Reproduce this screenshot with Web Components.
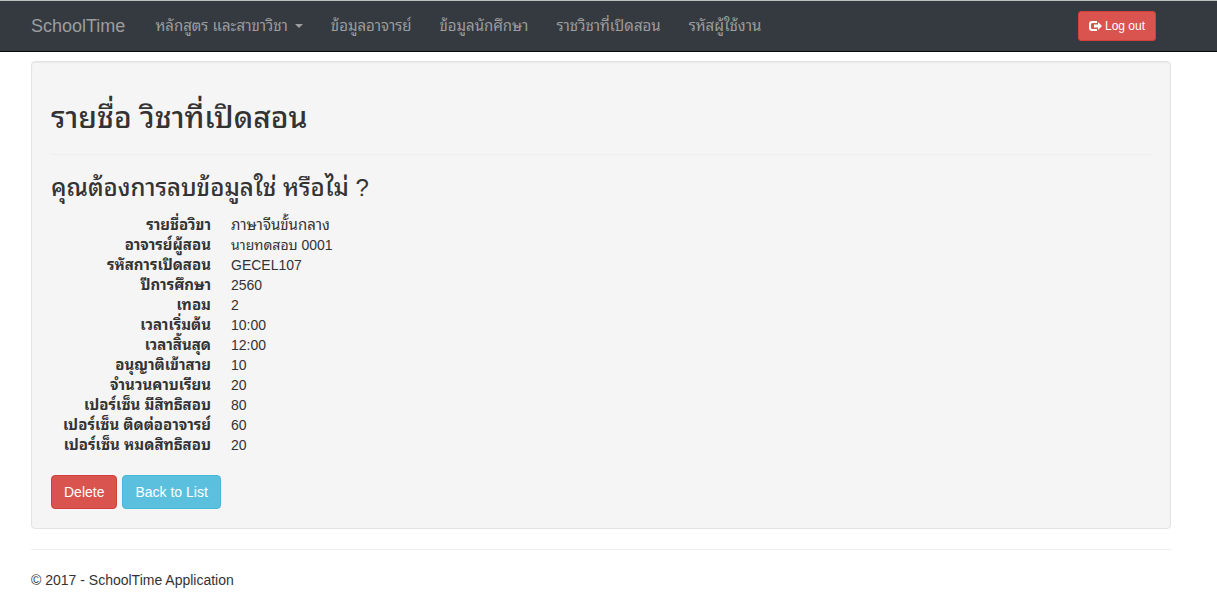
<!DOCTYPE html>
<html lang="th">
<head>
<meta charset="utf-8">
<meta name="viewport" content="width=device-width, initial-scale=1">
<title>SchoolTime Application</title>
<style>
  body {
    margin: 0;
    background: #fff;
    color: #333;
    font: 14px/20px "Liberation Sans", "Noto Sans Thai Looped", "Noto Looped Thai", "Loma", "Waree", "Garuda", "Umpush", "Noto Sans Thai", sans-serif;
    --gutter-left: 31px;
    --gutter-right: 46px;
  }
</style>
</head>
<body>
<school-app></school-app>

<script>
class BaseElement extends HTMLElement {
  connectedCallback() {
    if (this.shadowRoot) return;
    this.attachShadow({ mode: "open" }).innerHTML = this.render();
  }
}

customElements.define("nav-item", class extends BaseElement {
  render() {
    return `<style>
      :host { display: block; }
      a { display: flex; align-items: center; gap: 7px; padding: 15px 14px; font-size: 15px; color: #9d9d9d; text-decoration: none; white-space: nowrap; }
      a:hover { color: #fff; }
      .caret { border: 4px solid transparent; border-top-color: currentColor; border-bottom: 0; }
    </style>
    <a href="#"><slot></slot>${this.hasAttribute("menu") ? '<span class="caret"></span>' : ""}</a>`;
  }
});

customElements.define("site-button", class extends BaseElement {
  render() {
    return `<style>
      :host { display: block; }
      button { display: flex; align-items: center; gap: 2px; margin: 0; padding: 6px 12px; font: inherit; color: #fff; border: 1px solid #d43f3a; border-radius: 4px; background: #d9534f; white-space: nowrap; cursor: pointer; }
      :host([kind="info"]) button { background: #5bc0de; border-color: #46b8da; }
      :host([size="small"]) button { padding: 5px 10px; font-size: 12px; line-height: 18px; border-radius: 3px; }
    </style>
    <button type="button"><slot></slot></button>`;
  }
});

customElements.define("logout-icon", class extends BaseElement {
  render() {
    return `<style>:host { display: block; } svg { display: block; }</style>
    <svg width="14" height="12" viewBox="0 0 14 12" aria-hidden="true">
      <path d="M8 1H3Q0 1 0 4V8Q0 11 3 11H8V9H3.500Q2 9 2 7.500V4.500Q2 3 3.500 3H8Z" fill="#fff"/>
      <path d="M5 4.500H9V2L13 6L9 10V7.500H5Z" fill="#fff"/>
    </svg>`;
  }
});

customElements.define("site-navbar", class extends BaseElement {
  render() {
    return `<style>
      :host { display: block; background: #343a40; border-top: 1px solid #b9bfbb; border-bottom: 1px solid #080808; }
      nav { display: flex; align-items: center; padding: 0 var(--gutter-right) 0 var(--gutter-left); }
      .brand { padding-right: 16px; font-size: 18px; color: #9d9d9d; text-decoration: none; }
      .end { margin-left: auto; padding-right: 15px; }
    </style>
    <nav>
      <a class="brand" href="#">SchoolTime</a>
      <slot></slot>
      <div class="end"><slot name="end"></slot></div>
    </nav>`;
  }
});

customElements.define("content-panel", class extends BaseElement {
  render() {
    return `<style>
      :host { display: block; padding: 19px; background: #f5f5f5; border: 1px solid #e3e3e3; border-radius: 4px; box-shadow: inset 0 1px 1px rgba(0,0,0,.05); }
    </style><slot></slot>`;
  }
});

customElements.define("detail-list", class extends BaseElement {
  render() {
    const rows = [
      ["รายชื่อวิขา", "ภาษาจีนขั้นกลาง"],
      ["อาจารย์ผู้สอน", "นายทดสอบ 0001"],
      ["รหัสการเปิดสอน", "GECEL107"],
      ["ปีการศึกษา", "2560"],
      ["เทอม", "2"],
      ["เวลาเริ่มต้น", "10:00"],
      ["เวลาสิ้นสุด", "12:00"],
      ["อนุญาติเข้าสาย", "10"],
      ["จำนวนคาบเรียน", "20"],
      ["เปอร์เซ็น มีสิทธิสอบ", "80"],
      ["เปอร์เซ็น ติดต่ออาจารย์", "60"],
      ["เปอร์เซ็น หมดสิทธิสอบ", "20"]
    ];
    const thaiOnly = /^[\u0e00-\u0e7f ]+$/;
    return `<style>
      :host { display: block; }
      dl { display: grid; grid-template-columns: 160px 1fr; column-gap: 20px; grid-auto-rows: 20px; margin: 0; }
      dt { font-size: 15px; font-weight: 700; text-align: right; white-space: nowrap; }
      dd { margin: 0; }
      .thai { font-size: 15px; }
    </style>
    <dl>${rows.map(([k, v]) => `<dt>${k}</dt><dd${thaiOnly.test(v) ? ' class="thai"' : ""}>${v}</dd>`).join("")}</dl>`;
  }
});

customElements.define("school-app", class extends BaseElement {
  render() {
    return `<style>
      :host { display: block; }
      main, footer { margin: 0 var(--gutter-right) 0 var(--gutter-left); }
      main { padding-top: 9px; }
      h2, h3 { margin: 0; font-weight: 500; }
      h2 { padding: 20px 0; font-size: 30px; line-height: 33px; }
      h3 { padding: 20px 0 14px; font-size: 24px; line-height: 26px; }
      hr { margin: 0; border: 0; border-top: 1px solid #eee; }
      .actions { display: flex; gap: 5px; padding-top: 20px; }
      footer { padding-top: 20px; }
      p { margin: 0; padding: 20px 0 10px; }
    </style>
    <site-navbar>
      <nav-item menu>หลักสูตร และสาขาวิชา</nav-item>
      <nav-item>ข้อมูลอาจารย์</nav-item>
      <nav-item>ข้อมูลนักศึกษา</nav-item>
      <nav-item>ราชวิชาที่เปิดสอน</nav-item>
      <nav-item>รหัสผู้ใช้งาน</nav-item>
      <site-button slot="end" size="small"><logout-icon></logout-icon>Log out</site-button>
    </site-navbar>
    <main>
      <content-panel>
        <h2>รายชื่อ วิชาที่เปิดสอน</h2>
        <hr>
        <h3>คุณต้องการลบข้อมูลใช่ หรือไม่ ?</h3>
        <detail-list></detail-list>
        <div class="actions">
          <site-button>Delete</site-button>
          <site-button kind="info">Back to List</site-button>
        </div>
      </content-panel>
    </main>
    <footer>
      <hr>
      <p>© 2017 - SchoolTime Application</p>
    </footer>`;
  }
});
</script>
</body>
</html>
